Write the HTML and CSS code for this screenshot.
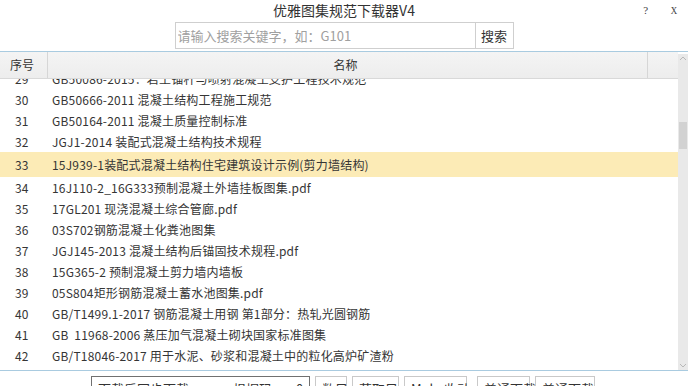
FILE: index.html
```html
<!DOCTYPE html>
<html lang="zh">
<head>
<meta charset="utf-8">
<title>优雅图集规范下载器V4</title>
<link rel="stylesheet" href="styles.css">
</head>
<body>
<div class="app">
  <div class="titlebar">
    <div></div>
    <div class="title">优雅图集规范下载器V4</div>
    <div class="winctl"><span class="help">?</span><span class="close">X</span></div>
  </div>
  <div class="search">
    <input class="search-input" type="text" placeholder="请输入搜索关键字，如：G101">
    <button class="search-btn">搜索</button>
  </div>
  <div class="table">
    <div class="grid">
      <div class="thead">
        <div class="th th-no">序号</div>
        <div class="th th-name">名称</div>
        <div class="th th-end"></div>
      </div>
      <div class="tbody">
        <div class="rows">
          <div class="row"><span class="no">29</span><span class="name">GB50086-2015：岩土锚杆与喷射混凝土支护工程技术规范</span></div>
          <div class="row"><span class="no">30</span><span class="name">GB50666-2011 混凝土结构工程施工规范</span></div>
          <div class="row"><span class="no">31</span><span class="name">GB50164-2011 混凝土质量控制标准</span></div>
          <div class="row"><span class="no">32</span><span class="name">JGJ1-2014 装配式混凝土结构技术规程</span></div>
          <div class="row row-sel"><span class="no">33</span><span class="name">15J939-1装配式混凝土结构住宅建筑设计示例(剪力墙结构)</span></div>
          <div class="row"><span class="no">34</span><span class="name">16J110-2_16G333预制混凝土外墙挂板图集.pdf</span></div>
          <div class="row"><span class="no">35</span><span class="name">17GL201 现浇混凝土综合管廊.pdf</span></div>
          <div class="row"><span class="no">36</span><span class="name">03S702钢筋混凝土化粪池图集</span></div>
          <div class="row"><span class="no">37</span><span class="name">JGJ145-2013 混凝土结构后锚固技术规程.pdf</span></div>
          <div class="row"><span class="no">38</span><span class="name">15G365-2 预制混凝土剪力墙内墙板</span></div>
          <div class="row"><span class="no">39</span><span class="name">05S804矩形钢筋混凝土蓄水池图集.pdf</span></div>
          <div class="row"><span class="no">40</span><span class="name">GB/T1499.1-2017 钢筋混凝土用钢 第1部分：热轧光圆钢筋</span></div>
          <div class="row"><span class="no">41</span><span class="name">GB&nbsp; 11968-2006 蒸压加气混凝土砌块国家标准图集</span></div>
          <div class="row"><span class="no">42</span><span class="name">GB/T18046-2017 用于水泥、砂浆和混凝土中的粒化高炉矿渣粉</span></div>
        </div>
      </div>
    </div>
    <div class="scrollbar">
      <div class="sb-arrow sb-up"><svg width="8" height="5" viewBox="0 0 8 5"><path d="M1 4 L4 1 L7 4" fill="none" stroke="#b8b8b8" stroke-width="1"/></svg></div>
      <div class="sb-track"><div class="sb-thumb"></div></div>
      <div class="sb-arrow sb-down"><svg width="8" height="5" viewBox="0 0 8 5"><path d="M1 1 L4 4 L7 1" fill="none" stroke="#b8b8b8" stroke-width="1"/></svg></div>
    </div>
  </div>
  <div class="footer">
    <div class="fbox fbox-wide"><span>下载后同步下载</span><span class="f-mid">根据码</span><span class="f-end">0</span></div>
    <div class="fbox fb-2">数目</div>
    <div class="fbox fb-3">获取目</div>
    <div class="fbox fb-4">Mulu 收动</div>
    <div class="fbox fb-5">普通下载</div>
    <div class="fbox fb-6">普通下载</div>
  </div>
</div>
</body>
</html>
```

FILE: styles.css
```css
* { box-sizing: border-box; }
html, body {
  margin: 0;
  padding: 0;
  background: #ffffff;
}
body {
  width: 688px;
  height: 386px;
  overflow: hidden;
  font-family: "Noto Sans CJK SC", "Microsoft YaHei", sans-serif;
  color: #333333;
}
.app {
  display: flex;
  flex-direction: column;
  width: 688px;
  height: 386px;
  overflow: hidden;
}
.app > * { flex: none; }
.titlebar {
  display: grid;
  grid-template-columns: 1fr auto 1fr;
  height: 20px;
  align-items: center;
}
.title {
  font-size: 14px;
  line-height: 20px;
  color: #333;
}
.winctl {
  display: flex;
  justify-content: flex-end;
  align-items: center;
  gap: 22px;
  padding-right: 10px;
  line-height: 20px;
}
.help {
  font-family: "Liberation Serif", serif;
  font-size: 11px;
  color: #444;
}
.close {
  font-family: "Liberation Serif", serif;
  font-size: 11px;
  color: #444;
  transform: scaleX(0.8);
}
.search {
  display: flex;
  justify-content: center;
  margin-top: 2px;
  height: 27px;
}
.search-input {
  width: 300px;
  height: 27px;
  border: 1px solid #cfcfcf;
  border-right: none;
  padding: 0 0 0 2px;
  font-family: "Noto Sans CJK SC", sans-serif;
  font-size: 13px;
  outline: none;
  color: #333;
}
.search-input::placeholder { color: #a0a0a0; }
.search-btn {
  width: 39px;
  height: 27px;
  border: 1px solid #cfcfcf;
  background: #ffffff;
  font-family: "Noto Sans CJK SC", sans-serif;
  font-size: 13px;
  color: #333;
  padding: 0;
}
.table {
  display: flex;
  margin-top: 2px;
  height: 320px;
  border-top: 1px solid #a9cbe0;
  border-bottom: 1px solid #a9cbe0;
}
.grid {
  width: 678px;
  display: flex;
  flex-direction: column;
}
.thead {
  display: flex;
  flex: none;
  height: 27px;
  background: linear-gradient(#f4f4f4, #ededed);
  border-bottom: 1px solid #d9d9d9;
  font-size: 12px;
}
.th {
  display: flex;
  align-items: center;
  line-height: 16px;
}
.th-no {
  width: 48px;
  padding-left: 10px;
  border-right: 1px solid #d6d6d6;
}
.th-name {
  flex: 1;
  justify-content: center;
  padding-right: 4px;
}
.th-end {
  width: 31px;
  border-left: 1px solid #d6d6d6;
}
.tbody {
  flex: 1;
  overflow: hidden;
}
.rows {
  margin-top: -11px;
}
.row {
  display: flex;
  align-items: center;
  height: 21px;
  font-size: 12px;
  line-height: 16px;
  white-space: nowrap;
  color: #353535;
  padding-top: 1px;
}
.row-sel {
  height: 25px;
  background: #fcebb6;
}
.no {
  width: 52px;
  padding-left: 15px;
  flex: none;
}
.name {
  letter-spacing: 0.2px;
}
.scrollbar {
  width: 10px;
  margin-top: 2px;
  background: #e9e9e9;
  display: flex;
  flex-direction: column;
}
.sb-arrow {
  height: 9px;
  flex: none;
  display: flex;
  align-items: center;
  justify-content: center;
}
.sb-track {
  flex: 1;
  padding-top: 59px;
}
.sb-thumb {
  height: 27px;
  margin: 0 1px;
  background: #d2d2d2;
}
.footer {
  display: flex;
  align-items: flex-start;
  padding-left: 91px;
  padding-top: 5px;
  gap: 5px;
  font-size: 13px;
  line-height: 18px;
}
.fbox {
  height: 24px;
  border: 1px solid #c9c9c9;
  padding: 3px 0 0 6px;
  white-space: nowrap;
  background: #fff;
  color: #333;
  flex: none;
}
.fbox-wide {
  width: 219px;
  border-color: #707070;
  display: flex;
}
.f-mid { margin-left: 44px; }
.f-end { margin-left: 24px; }
.fb-2 { width: 32px; }
.fb-3 { width: 47px; }
.fb-4 { width: 63px; }
.fb-5 { width: 53px; margin-left: 5px; }
.fb-6 { width: 60px; }
```
